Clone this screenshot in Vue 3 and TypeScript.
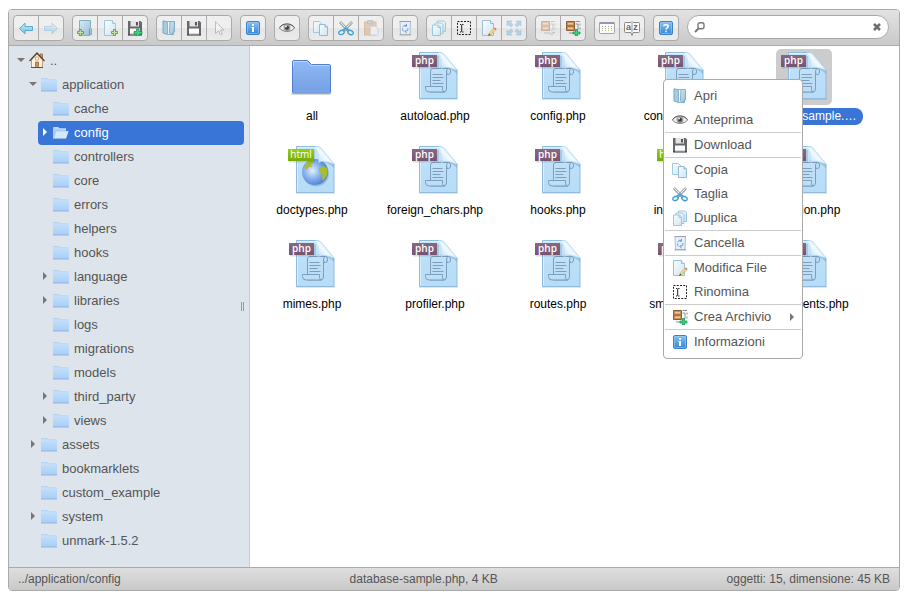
<script setup lang="ts">
import { ref } from 'vue'

interface Tool {
  icon: string
  label: string
  disabled?: boolean
}
interface TreeNode {
  name: string
  level: number
  icon?: string
  arrow?: 'open' | 'closed'
}
interface FileEntry {
  name: string
  kind: 'folder' | 'php' | 'html'
}

const toolGroups: Tool[][] = [
  [{ icon: 'back', label: 'Indietro' }, { icon: 'forward', label: 'Avanti', disabled: true }],
  [{ icon: 'mkdir', label: 'Nuova cartella' }, { icon: 'mkfile', label: 'Nuovo file' }, { icon: 'upload', label: 'Carica' }],
  [{ icon: 'open', label: 'Apri' }, { icon: 'save', label: 'Download' }, { icon: 'cursor', label: 'Seleziona', disabled: true }],
  [{ icon: 'info', label: 'Informazioni' }],
  [{ icon: 'eye', label: 'Anteprima' }],
  [{ icon: 'copy', label: 'Copia' }, { icon: 'cut', label: 'Taglia' }, { icon: 'paste', label: 'Incolla', disabled: true }],
  [{ icon: 'bin', label: 'Cancella' }],
  [
    { icon: 'duplicate', label: 'Duplica' },
    { icon: 'rename', label: 'Rinomina' },
    { icon: 'edit', label: 'Modifica File' },
    { icon: 'resize', label: 'Ridimensiona', disabled: true },
  ],
  [{ icon: 'extract', label: 'Estrai', disabled: true }, { icon: 'archive', label: 'Crea Archivio' }],
  [{ icon: 'view', label: 'Visualizza' }, { icon: 'sort', label: 'Ordina' }],
  [{ icon: 'help', label: 'Aiuto' }],
]

const tree: TreeNode[] = [
  { name: '..', level: 0, icon: 'home', arrow: 'open' },
  { name: 'application', level: 1, arrow: 'open' },
  { name: 'cache', level: 2 },
  { name: 'config', level: 2, icon: 'dir-open', arrow: 'closed' },
  { name: 'controllers', level: 2 },
  { name: 'core', level: 2 },
  { name: 'errors', level: 2 },
  { name: 'helpers', level: 2 },
  { name: 'hooks', level: 2 },
  { name: 'language', level: 2, arrow: 'closed' },
  { name: 'libraries', level: 2, arrow: 'closed' },
  { name: 'logs', level: 2 },
  { name: 'migrations', level: 2 },
  { name: 'models', level: 2 },
  { name: 'third_party', level: 2, arrow: 'closed' },
  { name: 'views', level: 2, arrow: 'closed' },
  { name: 'assets', level: 1, arrow: 'closed' },
  { name: 'bookmarklets', level: 1 },
  { name: 'custom_example', level: 1 },
  { name: 'system', level: 1, arrow: 'closed' },
  { name: 'unmark-1.5.2', level: 1 },
]

const files: FileEntry[] = [
  { name: 'all', kind: 'folder' },
  { name: 'autoload.php', kind: 'php' },
  { name: 'config.php', kind: 'php' },
  { name: 'constants.php', kind: 'php' },
  { name: 'database-sample.php', kind: 'php' },
  { name: 'doctypes.php', kind: 'html' },
  { name: 'foreign_chars.php', kind: 'php' },
  { name: 'hooks.php', kind: 'php' },
  { name: 'index.html', kind: 'html' },
  { name: 'migration.php', kind: 'php' },
  { name: 'mimes.php', kind: 'php' },
  { name: 'profiler.php', kind: 'php' },
  { name: 'routes.php', kind: 'php' },
  { name: 'smileys.php', kind: 'php' },
  { name: 'user_agents.php', kind: 'php' },
]

const menuSections: Tool[][] = [
  [{ icon: 'open', label: 'Apri' }, { icon: 'eye', label: 'Anteprima' }],
  [{ icon: 'save', label: 'Download' }],
  [{ icon: 'copy', label: 'Copia' }, { icon: 'cut', label: 'Taglia' }, { icon: 'duplicate', label: 'Duplica' }],
  [{ icon: 'bin', label: 'Cancella' }],
  [{ icon: 'edit', label: 'Modifica File' }, { icon: 'rename', label: 'Rinomina' }],
  [{ icon: 'archive', label: 'Crea Archivio' }],
  [{ icon: 'info', label: 'Informazioni' }],
]

const currentDir = ref('config')
const selectedFile = ref('database-sample.php')
const query = ref('')
</script>

<template>
  <svg class="sprite" width="0" height="0" aria-hidden="true">
    <defs>
      <linearGradient id="g-sky" x1="0" y1="0" x2="0" y2="1">
        <stop offset="0" stop-color="#d3f1fc" /><stop offset="1" stop-color="#62bde9" />
      </linearGradient>
      <linearGradient id="g-page" x1="0" y1="0" x2="1" y2="1">
        <stop offset="0" stop-color="#fafdff" /><stop offset="1" stop-color="#cfe4f1" />
      </linearGradient>
      <linearGradient id="g-glass" x1="0" y1="0" x2="1" y2="1">
        <stop offset="0" stop-color="#d5eaf4" /><stop offset="1" stop-color="#94bdd3" />
      </linearGradient>
      <linearGradient id="g-blue" x1="0" y1="0" x2="0" y2="1">
        <stop offset="0" stop-color="#8ac2f2" /><stop offset="1" stop-color="#3484d6" />
      </linearGradient>
      <linearGradient id="g-dir" x1="0" y1="0" x2="0" y2="1">
        <stop offset="0" stop-color="#c3e1fc" /><stop offset="1" stop-color="#a9cff6" />
      </linearGradient>
      <linearGradient id="g-big" x1="0" y1="0" x2="0" y2="1">
        <stop offset="0" stop-color="#8fb9f5" /><stop offset="1" stop-color="#749fe4" />
      </linearGradient>
      <linearGradient id="g-sheet" x1="0" y1="0" x2="0" y2="1">
        <stop offset="0" stop-color="#cae7fa" /><stop offset="0.5" stop-color="#bbdff8" /><stop offset="1" stop-color="#b7dcf7" />
      </linearGradient>
      <linearGradient id="g-fold" x1="0" y1="1" x2="1" y2="0.200">
        <stop offset="0" stop-color="#8fbcdd" /><stop offset="0.300" stop-color="#d5ebf9" /><stop offset="0.500" stop-color="#f2faff" /><stop offset="1" stop-color="#a9d4f3" />
      </linearGradient>
      <linearGradient id="g-globe-land" x1="0" y1="0" x2="0" y2="1">
        <stop offset="0" stop-color="#a3bf33" /><stop offset="1" stop-color="#b3b92d" />
      </linearGradient>
      <radialGradient id="g-globe" cx="0.4" cy="0.45" r="0.65">
        <stop offset="0" stop-color="#e3efff" /><stop offset="0.5" stop-color="#85b0ef" /><stop offset="1" stop-color="#4474cc" />
      </radialGradient>
      <linearGradient id="g-scroll" x1="0" y1="0" x2="0" y2="1">
        <stop offset="0" stop-color="#c3e1f6" /><stop offset="1" stop-color="#b9dbf3" />
      </linearGradient>
    </defs>

    <symbol id="i-back" viewBox="0 0 16 16">
      <path d="M1.5 8.5 7 3.2V6.5h7.5v4H7v3.3z" fill="url(#g-sky)" stroke="#5aa9d3" />
    </symbol>
    <symbol id="i-forward" viewBox="0 0 16 16">
      <path d="M14.5 8.5 9 3.2V6.5H1.500v4H9v3.300z" fill="url(#g-sky)" stroke="#5aa9d3" />
    </symbol>
    <symbol id="i-mkdir" viewBox="0 0 16 16">
      <path d="M2.500 .5h11v7.500l1 .8v6h-2v.7h-10z" fill="url(#g-glass)" stroke="#86aec5" />
      <path d="M12.500 8.500v6.500" stroke="#6f9bb4" />
      <path d="M2.300 9.500h2v2h2.200v2H4.300v2.200h-2v-2.200H.5v-2h1.800z" fill="#bfe59b" stroke="#5a9e35" stroke-width="0.900" />
    </symbol>
    <symbol id="i-mkfile" viewBox="0 0 16 16">
      <path d="M2.500 .5h8l3 3v12h-11z" fill="url(#g-page)" stroke="#a5c6da" />
      <path d="M10.500 .5v3h3" fill="#e8f5fc" stroke="#a5c6da" />
      <path d="M11.500 9.500h2v2h2.200v2h-2.200v2.200h-2v-2.200H9.500v-2h2z" fill="#bfe59b" stroke="#5a9e35" stroke-width="0.900" />
    </symbol>
    <symbol id="i-save" viewBox="0 0 16 16">
      <path d="M1 1h12.500L15 2.500V15H1z" fill="#66696c" />
      <path d="M3.500 1h8.500v5.500H3.500z" fill="#e2e4e6" />
      <path d="M9 2h2v3.500H9z" fill="#55585b" />
      <path d="M3 8.500h10V15H3z" fill="#fbfbfb" />
      <path d="M3 13h10v1.500H3z" fill="#d5d7d8" />
      <path d="M1 15h14" stroke="#2f3133" />
    </symbol>
    <symbol id="i-upload" viewBox="0 0 16 16">
      <use href="#i-save" width="16" height="16" />
      <path d="M9.500 9h2.500v2.500h3V14h-3v2.200H9.500V14H7v-2.500h2.500z" fill="#3bd27a" stroke="#14a04f" stroke-width="0.800" />
    </symbol>
    <symbol id="i-open" viewBox="0 0 16 16">
      <path d="M2 .8l4.500 1v12.700L2 13z" fill="#a5cce1" stroke="#7aa9c3" />
      <path d="M6.500 1.500h6v13h-6z" fill="url(#g-page)" stroke="#8ab5cc" />
      <path d="M9 1.500h4.500v10.500H12v3L8.500 13z" fill="url(#g-glass)" stroke="#82aec7" />
    </symbol>
    <symbol id="i-cursor" viewBox="0 0 16 16">
      <path d="M4.500 1.500v12l3-2.700 1.800 4 1.900-.8-1.800-3.900h3.600z" fill="#fff" stroke="#777" />
    </symbol>
    <symbol id="i-info" viewBox="0 0 16 16">
      <rect x="1.500" y="1.500" width="13" height="13" rx="1.500" fill="url(#g-blue)" stroke="#3a82cb" />
      <rect x="2.500" y="2.500" width="11" height="11" rx="1" fill="none" stroke="#9ccbf4" stroke-opacity="0.600" />
      <path d="M7 4h2v1.800H7zM6.500 7H9v5H7V8h-.5z" fill="#fff" />
    </symbol>
    <symbol id="i-help" viewBox="0 0 16 16">
      <rect x="1.500" y="1.500" width="13" height="13" rx="1.500" fill="url(#g-blue)" stroke="#3a82cb" />
      <rect x="2.500" y="2.500" width="11" height="11" rx="1" fill="none" stroke="#9ccbf4" stroke-opacity="0.600" />
      <path d="M5.800 6.300C5.800 4.200 10.200 4.200 10.200 6.300 10.200 7.800 8 7.800 8 9.500M8 10.800v1.500" fill="none" stroke="#fff" stroke-width="1.500" />
    </symbol>
    <symbol id="i-eye" viewBox="0 0 16 16">
      <path d="M.5 8C3.500 2.500 12.500 2.500 15.500 8 12.500 12.500 3.500 12.500 .5 8z" fill="#f2f2f2" stroke="#77797b" />
      <path d="M.5 7.500C3.500 3 12.500 3 15.500 7.500" fill="none" stroke="#5e6062" />
      <circle cx="8" cy="7.800" r="3.500" fill="#9b9d9f" /><circle cx="8" cy="7.800" r="2" fill="#3a3c3e" />
      <circle cx="7" cy="6.500" r="1" fill="#eee" />
    </symbol>
    <symbol id="i-copy" viewBox="0 0 16 16">
      <path d="M.5 1.500h6l2.500 2.500v8.500H.5z" fill="url(#g-page)" stroke="#a3c9df" />
      <path d="M6.500 4.500H12l2.500 2.500v8.500h-8z" fill="url(#g-page)" stroke="#8fbcd6" />
      <path d="M12 4.500V7h2.500" fill="none" stroke="#8fbcd6" />
    </symbol>
    <symbol id="i-cut" viewBox="0 0 16 16">
      <path d="M2 2l9 9.500M14 2l-9 9.500" stroke="#8d9396" stroke-width="2.600" />
      <path d="M2.300 2.200l8.500 9M13.700 2.200l-8.500 9" stroke="#e7eaec" stroke-width="1.200" />
      <ellipse cx="3.500" cy="12.500" rx="2.800" ry="2" fill="#d8f0fb" stroke="#3f9ccc" stroke-width="1.300" transform="rotate(-25 3.500 12.500)" />
      <ellipse cx="12.500" cy="12.500" rx="2.800" ry="2" fill="#d8f0fb" stroke="#3f9ccc" stroke-width="1.300" transform="rotate(25 12.500 12.500)" />
      <path d="M4.500 11 8 8l3.500 3" fill="none" stroke="#4ba6d4" stroke-width="1.800" />
    </symbol>
    <symbol id="i-paste" viewBox="0 0 16 16">
      <rect x="1.500" y="2" width="11.500" height="13" fill="#d59a5d" stroke="#b57a40" />
      <path d="M4.500 .8h5.500v3H4.500z" fill="#a5a5a5" stroke="#777" />
      <path d="M7.500 6.500h5l2.500 2.500v6H7.500z" fill="#f3f7fa" stroke="#aab5bd" />
    </symbol>
    <symbol id="i-bin" viewBox="0 0 16 16">
      <path d="M3 1.500h10.500l-.5 13H3.500z" fill="#e6eef7" stroke="#b3bdc6" />
      <path d="M2.500 1.500h11.500" stroke="#98a2ab" /><path d="M2.500 14.800h11.500" stroke="#a9b2b9" stroke-width="1.500" />
      <path d="M5.500 7Q7 4.500 9.500 5.500M9.500 3.800v2.500H7.500M11 8q.5 2.800-2.500 3.500M9.300 10l-1.500 1.700 1.800 1.300M5.500 8.500q0 2 1 2.800" fill="none" stroke="#6b9be0" />
    </symbol>
    <symbol id="i-duplicate" viewBox="0 0 16 16">
      <path d="M6.500 1H13l1.500 1.500v9h-8z" fill="url(#g-page)" stroke="#9cc8df" />
      <path d="M4 3h6.500L12 4.500v9H4z" fill="url(#g-page)" stroke="#9cc8df" />
      <path d="M1.500 5H7.500L9.500 7v8.500h-8z" fill="url(#g-page)" stroke="#9cc8df" />
      <path d="M7 5v2.500h2.500" fill="none" stroke="#9cc8df" />
    </symbol>
    <symbol id="i-rename" viewBox="0 0 16 16">
      <rect x="1.500" y="1.500" width="13" height="13" fill="none" stroke="#222" stroke-dasharray="2 1.250" />
      <path d="M4 4.500h1.200M6.200 4.500h1.300M5.700 4.800v7M4 12h1.200M6.200 12h1.300" stroke="#222" />
    </symbol>
    <symbol id="i-edit" viewBox="0 0 16 16">
      <path d="M1.500 .5h8l3 3v12h-11z" fill="url(#g-page)" stroke="#9dbfd5" />
      <path d="M9.500 .5v3h3" fill="#e8f5fc" stroke="#9dbfd5" />
      <path d="M7.500 15.500l1-2.700 5-4.800 1.500 1.600-5 4.900z" fill="#f8dc7c" stroke="#b89a55" stroke-width="0.600" />
      <path d="M13 8.500l1-1 1.600 1.600-1 1z" fill="#e0685d" /><path d="M7.300 15.800l.8-2 1.200 1.300z" fill="#333" />
    </symbol>
    <symbol id="i-resize" viewBox="0 0 16 16">
      <path d="M1 1h5L4.700 2.500 7 5 5 7 2.500 4.700 1 6zM15 1v5l-1.500-1.300L11 7 9 5l2.300-2.500L10 1zM1 15v-5l1.500 1.300L5 9l2 2-2.300 2.500L6 15zM15 15h-5l1.300-1.500L9 11l2-2 2.500 2.300L15 10z" fill="#58b2dc" stroke="#3c94c0" stroke-width="0.600" />
    </symbol>
    <symbol id="i-extract" viewBox="0 0 16 16">
      <path d="M1.500 1.500H9.500v9h-8z" fill="#c98f55" stroke="#8a6034" />
      <path d="M1.500 6h8" stroke="#8a6034" /><path d="M3 3h5v1.500H3zM3 7.500h5V9H3z" fill="#f0c58f" />
      <path d="M10.500 1.500H15M10.500 4H13v5.500M15 3.500v2M15 7.500v2M10.500 10H13M4 13h6M11.500 12.500h3.500" fill="none" stroke="#8b8e91" />
      <path d="M9 13l3 2 2-2" fill="none" stroke="#8b8e91" />
    </symbol>
    <symbol id="i-archive" viewBox="0 0 16 16">
      <use href="#i-extract" width="16" height="16" />
      <path d="M10.500 9.500h2v2.500H15v2h-2.500v2h-2v-2H8v-2h2.500z" fill="#3bd27a" stroke="#14a04f" stroke-width="0.800" />
    </symbol>
    <symbol id="i-view" viewBox="0 0 16 16">
      <rect x=".5" y="2.500" width="15" height="11" rx="1" fill="#fafafa" stroke="#a5a5a5" />
      <path d="M.5 3h15" stroke="#999" stroke-width="2" />
      <path d="M3 6.500h11" stroke="#7fa6dd" stroke-dasharray="1 2" /><path d="M3 8.500h11" stroke="#8cc589" stroke-dasharray="1 2" /><path d="M3 10.500h11" stroke="#d9b06c" stroke-dasharray="1 2" />
    </symbol>
    <symbol id="i-sort" viewBox="0 0 16 16">
      <path d="M1.500 2.500H7L8 1.500l1 1h5.500q1 0 1 1v8q0 1-1 1H9l-1 3-1-3H1.500q-1 0-1-1v-8q0-1 1-1z" fill="#fafafa" stroke="#8a8a8a" />
      <path d="M8 3v9" stroke="#999" />
    </symbol>
    <symbol id="i-home" viewBox="0 0 16 16">
      <path d="M11 2h2.500v4H11z" fill="#d9a06a" stroke="#8a5a36" stroke-width="0.700" />
      <path d="M2.500 8 8 2l5.500 6v7.500h-11z" fill="#fdf3e0" stroke="#c29b77" />
      <path d="M.5 9 8 1l7.500 8" fill="none" stroke="#5b4038" stroke-width="1.200" />
      <path d="M6.500 5h3v3h-3z" fill="#fff" stroke="#c8a060" stroke-width="0.800" />
      <path d="M6.500 10h3v5.500h-3z" fill="#cd935a" stroke="#9a6a42" stroke-width="0.800" />
      <path d="M2 15.500h12" stroke="#6b4a3a" />
    </symbol>
    <symbol id="i-dir" viewBox="0 0 16 16">
      <path d="M0 3q0-1 1-1h4.500L7 3.500h9V15H0z" fill="url(#g-dir)" />
      <path d="M.5 3.500V2.500h5L7 4h8.500" fill="none" stroke="#b4d3ef" />
      <path d="M1 5h14" stroke="#cde6fd" stroke-opacity="0.600" /><path d="M0 15h16" stroke="#92b5dc" />
    </symbol>
    <symbol id="i-dir-open" viewBox="0 0 16 16">
      <path d="M0 14V4q0-1 1-1h4l1.500 1.500H13V7h2.500L13 14z" fill="#a9cdf3" />
      <path d="M1 14.500 3.500 7.500H15.500L13 14.500z" fill="#d3e9fe" /><path d="M0 14.500h13" stroke="#8fb6e2" />
      <path d="M.5 4h5L7 5h6" fill="none" stroke="#c9e2fb" />
    </symbol>

    <symbol id="f-folder" viewBox="0 0 56 56">
      <path d="M7 45h40" stroke="#000" stroke-opacity="0.150" stroke-width="2" />
      <path d="M8.500 43V13q0-1.500 1.500-1.500h13.500l4 4H45q1.500 0 1.500 1.500v26q0 1-1 1h-36q-1 0-1-1z" fill="url(#g-big)" stroke="#537fca" />
      <path d="M9.500 17.500v-5H23l4 4h18.500" fill="none" stroke="#b7d3fb" />
      <path d="M10 43h36" stroke="#a3c2f3" stroke-opacity="0.500" />
    </symbol>
    <symbol id="f-sheet" viewBox="0 0 56 56">
      <path d="M12 50h39" stroke="#48708f" stroke-opacity="0.350" />
      <path d="M12.500 3.500H33L50 21v28.500H12.500z" fill="url(#g-sheet)" stroke="#8fbbdf" />
      <path d="M13.500 48.500V4.500H33" fill="none" stroke="#e4f4fe" stroke-opacity="0.700" />
    </symbol>
    <symbol id="f-fold" viewBox="0 0 56 56">
      <path d="M33 20Q42 17 50 25V21L34 17z" fill="#6090b8" fill-opacity="0.350" />
      <path d="M31 3.500Q37 10 34 20 41.500 15.500 50.500 21.500L36.500 4.500Q35 3.500 33 3.500z" fill="url(#g-fold)" />
      <path d="M31 3.500h2Q35.500 3.500 37 5L50.500 21.500" fill="none" stroke="#a3cdec" stroke-width="0.700" />
    </symbol>
    <symbol id="f-php" viewBox="0 0 56 56">
      <use href="#f-sheet" width="56" height="56" />
      <g fill="url(#g-scroll)" stroke="#7a9fc1">
        <path d="M40 25.500h1.500q2 0 2-2.500V22q0-2.500-2-2.500H39z" />
        <path d="M23.500 22q0-2.500 2.500-2.500h15q-1.500 1-1.500 3.500V40q0 3-3 3H23.500z" />
        <path d="M18.500 37.500h17v3q0 2.500 2 2.500H22q-3.500 0-3.500-3.500z" />
      </g>
      <path d="M25.500 25.500h10M25.500 28.500h11M25.500 31.500h8M25.500 34.500h11" stroke="#7a9fc1" />
      <use href="#f-fold" width="56" height="56" />
      <path d="M6 7h26v12.500H6z" fill="#31465c" fill-opacity="0.180" />
    </symbol>
    <symbol id="f-html" viewBox="0 0 56 56">
      <use href="#f-sheet" width="56" height="56" />
      <circle cx="32" cy="30.500" r="13" fill="#5488b2" fill-opacity="0.350" />
      <circle cx="31" cy="29" r="13" fill="url(#g-globe)" />
      <path d="M20 25q2-7 9-8.500l1 3-3 2 1 3-3-1-2 3z" fill="url(#g-globe-land)" />
      <path d="M35 25l4-2 4 2q1.500 5-1 9l-3 4-1-3 1-3-4-3z" fill="url(#g-globe-land)" />
      <use href="#f-fold" width="56" height="56" />
      <path d="M5 7h26v12.500H5z" fill="#31465c" fill-opacity="0.180" />
    </symbol>
  </svg>

  <div class="manager">
    <header class="toolbar">
      <div v-for="(group, g) in toolGroups" :key="g" class="tool-group">
        <button
          v-for="tool in group"
          :key="tool.icon"
          type="button"
          class="tool"
          :aria-label="tool.label"
          :disabled="tool.disabled"
        >
          <svg class="icon" viewBox="0 0 16 16" aria-hidden="true">
            <use :href="'#i-' + tool.icon" width="16" height="16" />
            <template v-if="tool.icon === 'sort'">
              <text class="sort-letter" x="4.500" y="10">a</text>
              <text class="sort-letter" x="11.500" y="10">z</text>
            </template>
          </svg>
        </button>
      </div>
      <form class="search" role="search" @submit.prevent>
        <label class="search-label" for="search-box" aria-label="Cerca">
          <svg class="search-icon" viewBox="0 0 12 12" aria-hidden="true">
            <path d="M4.500 7.500 1 11" stroke="#777" stroke-width="2" />
            <rect x="4" y="1.700" width="6" height="6" rx="2" fill="none" stroke="#777" stroke-width="1.400" />
          </svg>
        </label>
        <input id="search-box" v-model="query" type="text" class="search-box" />
        <button type="button" class="clear" aria-label="Annulla" @click="query = ''">
          <svg class="clear-icon" viewBox="0 0 8 8" aria-hidden="true">
            <path d="M1 1l6 6M7 1 1 7" stroke="#6e6e6e" stroke-width="2.600" />
          </svg>
        </button>
      </form>
    </header>

    <div class="workspace">
      <nav class="sidebar" aria-label="Cartelle">
        <ul class="tree">
          <li v-for="node in tree" :key="node.name" :class="'level-' + node.level">
            <a
              href="#"
              class="node"
              :class="{ current: node.name === currentDir }"
              @click.prevent="currentDir = node.name"
            >
              <span class="arrow" :class="node.arrow"></span>
              <svg class="icon" viewBox="0 0 16 16" aria-hidden="true"><use :href="'#i-' + (node.icon ?? 'dir')" width="16" height="16" /></svg>
              <span class="node-name">{{ node.name }}</span>
            </a>
          </li>
        </ul>
        <span class="grip"></span>
      </nav>

      <main class="files">
        <button
          v-for="file in files"
          :key="file.name"
          type="button"
          class="file"
          :class="{ selected: file.name === selectedFile }"
          @click="selectedFile = file.name"
        >
          <span class="thumb">
            <svg class="thumb-icon" viewBox="0 0 56 56" aria-hidden="true"><use :href="'#f-' + file.kind" width="56" height="56" /></svg>
            <span v-if="file.kind !== 'folder'" class="badge" :class="'badge-' + file.kind">{{ file.kind }}</span>
          </span>
          <span class="file-name">{{ file.name }}</span>
        </button>
      </main>
    </div>

    <footer class="status">
      <span>../application/config</span>
      <span>database-sample.php, 4 KB</span>
      <span>oggetti: 15, dimensione: 45 KB</span>
    </footer>

    <div class="menu" role="menu">
      <div v-for="(section, s) in menuSections" :key="s" class="menu-section">
        <button v-for="item in section" :key="item.label" type="button" role="menuitem" class="menu-item">
          <svg class="icon" viewBox="0 0 16 16" aria-hidden="true"><use :href="'#i-' + item.icon" width="16" height="16" /></svg>
          <span class="menu-label">{{ item.label }}</span>
          <span v-if="item.icon === 'archive'" class="submenu"></span>
        </button>
      </div>
    </div>
  </div>
</template>

<style>
body {
  background: #fff;
}
</style>

<style scoped>
.sprite {
  position: absolute;
}
.manager,
.manager button,
.manager input {
  box-sizing: border-box;
  font-family: 'Liberation Sans', Arial, sans-serif;
}
.manager {
  position: relative;
  display: flex;
  flex-direction: column;
  min-height: calc(100vh - 16px);
  margin: 9px 9px 7px 8px;
  overflow: hidden;
  border: 1px solid #aaa;
  border-radius: 4px;
  color: #555;
  font-size: 13px;
}
.manager button {
  margin: 0;
  padding: 0;
  border: 0;
  background: none;
  color: inherit;
  cursor: pointer;
}
.icon {
  display: block;
  flex: none;
  width: 16px;
  height: 16px;
}

.toolbar {
  display: flex;
  align-items: flex-start;
  gap: 8px;
  padding: 5px 10px 4px 4px;
  border-bottom: 1px solid #aaa;
  background: linear-gradient(#e2e2e2, #c9c9c9);
}
.tool-group {
  display: flex;
  flex: none;
  overflow: hidden;
  border: 1px solid #aaa;
  border-radius: 4px;
  background: linear-gradient(#efefef 50%, #e5e5e5 50%, #ebebeb);
}
.manager .tool {
  display: flex;
  align-items: center;
  justify-content: center;
  width: 24px;
  height: 24px;
}
.manager .tool + .tool {
  width: 25px;
  border-left: 1px solid #aaa;
}
.tool:disabled .icon {
  opacity: 0.4;
}
.sort-letter {
  fill: #666;
  font-family: 'Liberation Sans', Arial, sans-serif;
  font-size: 9px;
  font-weight: 700;
  text-anchor: middle;
}
.search {
  display: flex;
  flex: 1;
  align-items: center;
  box-sizing: border-box;
  max-width: 202px;
  height: 24px;
  margin-left: auto;
  padding: 0 7px 0 6px;
  border: 1px solid #aaa;
  border-radius: 12px;
  background: #fff;
}
.search-icon {
  display: block;
  width: 12px;
  height: 12px;
}
.search-box {
  flex: 1;
  min-width: 0;
  padding: 0 4px;
  border: 0;
  outline: 0;
  background: transparent;
  color: #555;
  font-size: 13px;
}
.clear-icon {
  display: block;
  width: 8px;
  height: 8px;
}

.workspace {
  display: flex;
  flex: 1;
}
.sidebar {
  position: relative;
  box-sizing: border-box;
  width: 241px;
  flex: none;
  padding: 3px 5px;
  border-right: 1px solid #ccc;
  background: #dde4eb;
}
.tree {
  margin: 0;
  padding: 0;
  list-style: none;
}
.level-1 {
  padding-left: 12px;
}
.level-2 {
  padding-left: 24px;
}
.node {
  display: flex;
  align-items: center;
  box-sizing: border-box;
  height: 24px;
  padding-bottom: 2px;
  border-radius: 4px;
  color: #555;
  text-decoration: none;
}
.node.current {
  background: #3875d7;
  color: #fff;
}
.node-name {
  margin-left: 5px;
}
.arrow {
  display: flex;
  justify-content: center;
  width: 14px;
  margin-right: 1px;
  color: #777;
}
.current .arrow {
  color: #fff;
}
.arrow.open::before {
  content: '';
  border: 4px solid transparent;
  border-top-color: currentColor;
  border-bottom-width: 0;
}
.arrow.closed::before,
.submenu::before {
  content: '';
  border: 4px solid transparent;
  border-left-color: currentColor;
  border-right-width: 0;
}
.grip {
  position: absolute;
  top: 50%;
  right: 5px;
  width: 1px;
  height: 9px;
  margin-top: -5px;
  border: solid #999;
  border-width: 0 1px;
}

.files {
  display: grid;
  flex: 1;
  grid-template-columns: repeat(auto-fill, 120px);
  grid-auto-rows: 90px;
  align-content: start;
  gap: 4px 3px;
  padding: 3px 0 0 2px;
  background: #fff;
}
.manager .file {
  display: flex;
  flex-direction: column;
  align-items: center;
  gap: 3px;
  min-width: 0;
  color: #000;
  font-size: 12px;
}
.thumb {
  position: relative;
  border-radius: 5px;
}
.thumb-icon {
  display: block;
  width: 56px;
  height: 56px;
}
.badge {
  position: absolute;
  top: 6px;
  left: 5px;
  width: 25px;
  height: 12px;
  background: linear-gradient(#886883, #745471);
  color: #fff;
  font-family: 'Open Sans', 'Noto Sans', sans-serif;
  font-size: 10px;
  font-weight: 600;
  line-height: 11px;
  text-align: center;
}
.badge-html {
  left: 4px;
  width: 26px;
  background: linear-gradient(#98cf0c, #76ab08);
  font-weight: 400;
}
.file-name {
  box-sizing: border-box;
  max-width: 118px;
  padding: 1px 4px;
  overflow: hidden;
  border-radius: 8px;
  line-height: 15px;
  text-overflow: ellipsis;
  white-space: nowrap;
}
.selected .thumb {
  background: #ccc;
}
.selected .file-name {
  background: #3875d7;
  color: #fff;
}

.status {
  display: flex;
  justify-content: space-between;
  padding: 4px 9px 3px;
  border-top: 1px solid #aaa;
  background: linear-gradient(#dedede, #c9c9c9);
  font-size: 12px;
  line-height: 15px;
}

.menu {
  position: absolute;
  top: 69px;
  left: 654px;
  box-sizing: border-box;
  width: 140px;
  padding: 4px 1px;
  border: 1px solid #aaa;
  border-radius: 4px;
  background: #fff;
}
.menu-section + .menu-section {
  border-top: 1px solid #ccc;
}
.manager .menu-item {
  display: flex;
  align-items: center;
  gap: 6px;
  width: 100%;
  height: 24px;
  padding: 0 7px;
  font-size: 13px;
}
.menu-label {
  padding-bottom: 2px;
}
.submenu {
  display: flex;
  margin-left: auto;
  color: #777;
}
</style>
